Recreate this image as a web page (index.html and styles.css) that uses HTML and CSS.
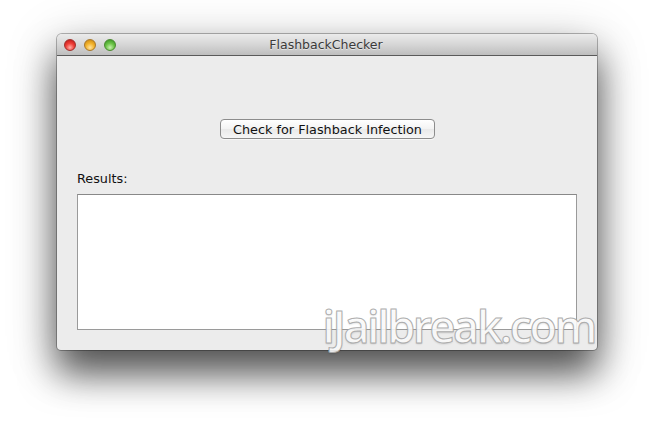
FILE: index.html
```html
<!DOCTYPE html>
<html>
<head>
<meta charset="utf-8">
<link rel="stylesheet" href="styles.css">
</head>
<body>
<div class="window">
  <div class="titlebar">
    <div class="lights">
      <span class="light red"></span>
      <span class="light yellow"></span>
      <span class="light green"></span>
    </div>
    <div class="title">FlashbackChecker</div>
  </div>
  <div class="content">
    <div class="btnrow"><button class="btn">Check for Flashback Infection</button></div>
    <div class="label">Results:</div>
    <div class="results"></div>
  </div>
  <div class="watermark">iJailbreak.com</div>
</div>
</body>
</html>
```
FILE: styles.css
```css
html, body { margin: 0; padding: 0; background: #fff; }
body { padding: 34px 0 0 57px; width: 654px; height: 429px; box-sizing: border-box; overflow: hidden; font-family: "DejaVu Sans", "Lucida Grande", sans-serif; }
.window {
  position: relative;
  width: 540px; height: 316px;
  background: #ececec;
  border-radius: 5px 5px 4px 4px;
  box-shadow: 0 0 0 1px rgba(0,0,0,0.28), 0 24px 36px rgba(0,0,0,0.6), 0 10px 50px rgba(0,0,0,0.25);
  display: flex; flex-direction: column;
}
.titlebar {
  position: relative;
  height: 22px;
  background: linear-gradient(#ebebeb, #d6d6d6 50%, #bebebe);
  border-bottom: 1px solid #5a5a5a;
  border-radius: 5px 5px 0 0;
  box-sizing: border-box;
  display: flex; align-items: center; justify-content: center;
}
.lights { position: absolute; left: 7px; top: 5px; display: flex; gap: 8px; }
.light { width: 12px; height: 12px; border-radius: 50%; box-sizing: border-box; }
.red { background: radial-gradient(circle at 50% 75%, #ffb0a8 0, #f0413a 45%, #b8100e 100%); border: 1px solid #a0302c; }
.yellow { background: radial-gradient(circle at 50% 75%, #ffe3a0 0, #f4b52e 45%, #c4800a 100%); border: 1px solid #a8782a; }
.green { background: radial-gradient(circle at 50% 75%, #c8f0b0 0, #6fc64a 45%, #2f8c1c 100%); border: 1px solid #4a8a30; }
.title { font-size: 12.5px; color: #3a3a3a; text-shadow: 0 1px 0 rgba(255,255,255,0.5); margin-left: -2px; }
.content { flex: 1; display: flex; flex-direction: column; padding: 63px 20px 20px 20px; }
.btnrow { display: flex; justify-content: center; padding-left: 1px; }
.btn {
  font-family: "DejaVu Sans", sans-serif; font-size: 12.8px; color: #111;
  width: 215px; height: 20px; padding: 0;
  background: linear-gradient(#ffffff, #f3f3f3 50%, #e9e9e9 51%, #f6f6f6);
  border: 1px solid #8c8c8c; border-radius: 4px;
  box-shadow: 0 1px 0 rgba(255,255,255,0.6);
}
.label { font-size: 12.8px; color: #111; margin-top: 32px; height: 23px; }
.results { flex: 1; background: #fff; border: 1px solid #9a9a9a; border-top-color: #888; }
.watermark {
  position: absolute; right: 2px; bottom: 4px;
  font-family: "Open Sans", "Lato", sans-serif; font-size: 45px; font-weight: 600; letter-spacing: -2.5px;
  color: rgba(255,255,255,0.9);
  -webkit-text-stroke: 1px rgba(165,165,165,0.9);
  text-shadow: 0 1px 2px rgba(0,0,0,0.18);
  line-height: 0.9;
}
```
